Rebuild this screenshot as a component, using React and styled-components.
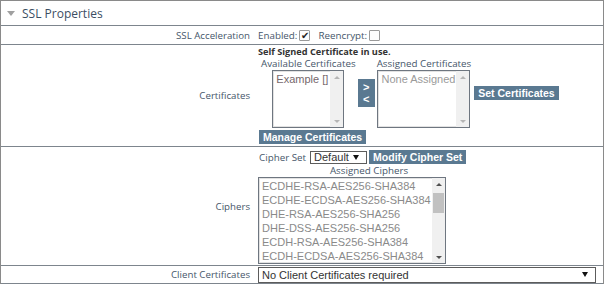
import React from 'react';
import styled, { createGlobalStyle } from 'styled-components';

const GlobalStyle = createGlobalStyle`
  html, body { margin: 0; padding: 0; background: #fff; }
  body { font-family: 'Open Sans', 'Noto Sans', sans-serif; }
`;

const Panel = styled.div`
  width: 604px;
  height: 284px;
  box-sizing: border-box;
  border: 1px solid #8a8a8a;
  border-bottom: none;
  overflow: hidden;
`;

const Header = styled.div`
  height: 24px;
  display: flex;
  align-items: center;
  gap: 7px;
  padding-left: 6px;
  border-bottom: 1px solid #7d858d;
  font-size: 12px;
  color: #3b4e63;
`;

const Caret = styled.span`
  width: 0;
  height: 0;
  border-left: 4px solid transparent;
  border-right: 4px solid transparent;
  border-top: 5px solid #a0a0a0;
  margin-top: 1px;
`;

const Row = styled.div`
  display: grid;
  grid-template-columns: 257px 1fr;
  height: ${p => p.h}px;
  border-bottom: 1px solid #7d858d;
`;

const Label = styled.div`
  display: flex;
  align-items: center;
  justify-content: flex-end;
  padding-right: 8px;
  font-size: 9.7px;
  color: #46566a;
`;

const Value = styled.div`
  display: flex;
  flex-direction: ${p => (p.column ? 'column' : 'row')};
  align-items: ${p => (p.column ? 'flex-start' : 'center')};
  padding-top: ${p => p.pt || 0}px;
  font-size: 9.8px;
  color: #46566a;
`;

const Check = styled.span`
  width: 9px;
  height: 9px;
  border: 1px solid #9a9a9a;
  border-radius: 1px;
  margin: 0 8px 0 2px;
  display: flex;
  align-items: center;
  justify-content: center;
  font-size: 10px;
  line-height: 1;
  color: #222;
  background: #fdfdfd;
`;

const Note = styled.div`
  font-weight: bold;
  font-size: 9.2px;
  line-height: 12px;
  color: #333;
`;

const CertLine = styled.div`
  display: flex;
  align-items: center;
  gap: 2px;
  margin-left: 3px;
`;

const Group = styled.div`
  display: flex;
  flex-direction: column;
  align-items: center;
`;

const Caption = styled.div`
  line-height: 12px;
  color: #46566a;
  white-space: nowrap;
`;

const ListBox = styled.div`
  width: ${p => p.w}px;
  height: ${p => p.h}px;
  box-sizing: border-box;
  border: 1px solid #6e7680;
  box-shadow: inset 0 0 0 1px #e2e2e2;
  display: flex;
  background: #fff;
`;

const Items = styled.div`
  flex: 1;
  padding: 1px 3px 0;
  font-family: 'Liberation Sans', Arial, sans-serif;
  font-size: 11px;
  line-height: 14px;
  color: ${p => p.color};
  white-space: nowrap;
  overflow: hidden;
`;

const Scroll = styled.div`
  width: 13px;
  background: #f0f0f0;
  display: flex;
  flex-direction: column;
  align-items: center;
  justify-content: space-between;
  padding: 5px 0 4px;
  box-sizing: border-box;
  position: relative;
`;

const Arrow = styled.span`
  width: 0;
  height: 0;
  border-left: 3px solid transparent;
  border-right: 3px solid transparent;
  ${p => (p.up ? 'border-bottom' : 'border-top')}: 3px solid ${p => p.c};
`;

const Thumb = styled.div`
  position: absolute;
  left: 1px;
  right: 1px;
  top: 15px;
  height: 20px;
  background: #c1c1c1;
`;

const Button = styled.div`
  display: inline-flex;
  align-items: center;
  height: 14px;
  padding: 0 4px;
  background: #5a7991;
  color: #fff;
  font-family: 'Liberation Sans', Arial, sans-serif;
  font-weight: bold;
  font-size: 10.5px;
  white-space: nowrap;
  margin: ${p => p.m || '0'};
`;

const Swap = styled.div`
  width: 17px;
  height: 28px;
  background: #5a7991;
  color: #fff;
  font-family: 'Liberation Sans', Arial, sans-serif;
  font-weight: bold;
  font-size: 11px;
  line-height: 12px;
  display: flex;
  flex-direction: column;
  align-items: center;
  justify-content: center;
`;

const Select = styled.div`
  width: ${p => p.w}px;
  height: ${p => p.h}px;
  box-sizing: border-box;
  border: 1px solid #5c5c5c;
  display: flex;
  align-items: center;
  justify-content: space-between;
  padding: 0 7px 0 3px;
  font-family: 'Liberation Sans', Arial, sans-serif;
  font-size: 11px;
  color: #333;
  background: #fff;
`;

const Drop = styled.span`
  width: 0;
  height: 0;
  border-left: 3px solid transparent;
  border-right: 3px solid transparent;
  border-top: 5px solid #111;
`;

const CipherLine = styled.div`
  display: flex;
  align-items: center;
  gap: 2px;
  height: 14px;
  margin-left: 1px;
`;

const SetLabel = styled.span`
  margin-right: 2px;
`;

const ListCaption = styled.div`
  width: 222px;
  text-align: center;
  line-height: 12px;
  margin-top: 1px;
`;

const ciphers = [
  'ECDHE-RSA-AES256-SHA384',
  'ECDHE-ECDSA-AES256-SHA384',
  'DHE-RSA-AES256-SHA256',
  'DHE-DSS-AES256-SHA256',
  'ECDH-RSA-AES256-SHA384',
  'ECDH-ECDSA-AES256-SHA384',
];

function Scrollbar({ active }) {
  const c = active ? '#505050' : '#b5b5b5';
  return (
    <Scroll>
      <Arrow up c={c} />
      {active && <Thumb />}
      <Arrow c={c} />
    </Scroll>
  );
}

export default function App() {
  return (
    <>
      <GlobalStyle />
      <Panel>
        <Header>
          <Caret />
          SSL Properties
        </Header>

        <Row h={18}>
          <Label>SSL Acceleration</Label>
          <Value>
            Enabled:<Check>✔</Check>
            Reencrypt:<Check />
          </Value>
        </Row>

        <Row h={101}>
          <Label>Certificates</Label>
          <Value column pt={1}>
            <Note>Self Signed Certificate in use.</Note>
            <CertLine>
              <Group>
                <Caption>Available Certificates</Caption>
                <ListBox w={72} h={58}>
                  <Items color="#76676c">Example []</Items>
                  <Scrollbar />
                </ListBox>
              </Group>
              <Swap>
                <span>&gt;</span>
                <span>&lt;</span>
              </Swap>
              <Group>
                <Caption>Assigned Certificates</Caption>
                <ListBox w={93} h={58}>
                  <Items color="#9a9a9a">None Assigned</Items>
                  <Scrollbar />
                </ListBox>
              </Group>
              <Button m="0 0 0 1px">Set Certificates</Button>
            </CertLine>
            <Button m="2px 0 0 1px">Manage Certificates</Button>
          </Value>
        </Row>

        <Row h={118}>
          <Label>Ciphers</Label>
          <Value column pt={3}>
            <CipherLine>
              <SetLabel>Cipher Set</SetLabel>
              <Select w={57} h={13}>
                Default
                <Drop />
              </Select>
              <Button>Modify Cipher Set</Button>
            </CipherLine>
            <ListCaption>Assigned Ciphers</ListCaption>
            <ListBox w={188} h={87}>
              <Items color="#8a8a8a">
                {ciphers.map(c => (
                  <div key={c}>{c}</div>
                ))}
              </Items>
              <Scrollbar active />
            </ListBox>
          </Value>
        </Row>

        <Row h={17}>
          <Label>Client Certificates</Label>
          <Value>
            <Select w={338} h={16}>
              No Client Certificates required
              <Drop />
            </Select>
          </Value>
        </Row>
      </Panel>
    </>
  );
}
